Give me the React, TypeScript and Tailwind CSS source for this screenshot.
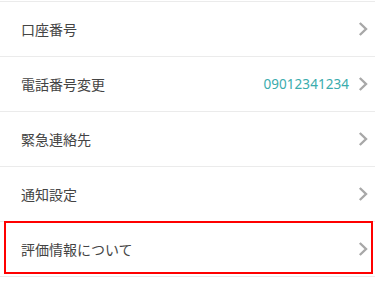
const rows = [
  { label: "口座番号" },
  { label: "電話番号変更", value: "09012341234" },
  { label: "緊急連絡先" },
  { label: "通知設定" },
  { label: "評価情報について", highlight: true },
];

const Chevron = () => (
  <svg width="10" height="14" viewBox="0 0 10 14" className="shrink-0">
    <path d="M1.8 1 L8 7 L1.8 13" fill="none" stroke="#a8a8a8" strokeWidth="2.4" />
  </svg>
);

export default function App() {
  return (
    <div
      className="w-[375px] h-[282px] overflow-hidden bg-white pt-[1px]"
      style={{ fontFamily: '"Noto Sans", "Noto Sans CJK JP", sans-serif' }}
    >
      <div className="border-t border-[#ebebeb]">
        {rows.map((row) => (
          <div key={row.label} className="relative flex h-[55px] items-center border-b border-[#ebebeb] pl-[21px] pr-[7px]">
            <span className="flex-1 text-[14px] text-[#444]">{row.label}</span>
            {row.value && (
              <span className="mr-[9px] text-[13.5px] tracking-[0.05px] text-[#3aacad]">{row.value}</span>
            )}
            <Chevron />
            {row.highlight && (
              <div className="absolute left-[4px] right-[2px] top-[-1px] bottom-[2px] border-2 border-[#f00]" />
            )}
          </div>
        ))}
      </div>
    </div>
  );
}
